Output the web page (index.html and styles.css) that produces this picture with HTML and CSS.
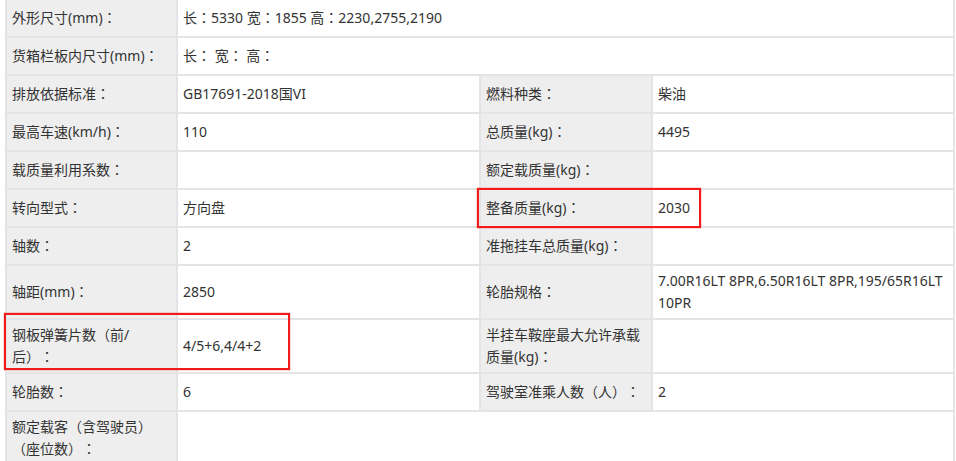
FILE: index.html
```html
<!DOCTYPE html>
<html lang="ja">

<head>
    <meta charset="UTF-8">
    <meta name="viewport" content="width=device-width, initial-scale=1.0">
    <title>车辆参数</title>
    <link rel="stylesheet" href="styles.css">
</head>

<body>

    <div class="params">
        <table class="spec">
            <colgroup>
                <col class="c-label">
                <col class="c-value">
                <col class="c-label2">
                <col class="c-value2">
            </colgroup>
            <tr>
                <td class="label">外形尺寸(mm)：</td>
                <td colspan="3">长：5330 宽：1855 高：2230,2755,2190</td>
            </tr>
            <tr>
                <td class="label">货箱栏板内尺寸(mm)：</td>
                <td colspan="3">长： 宽： 高：</td>
            </tr>
            <tr>
                <td class="label">排放依据标准：</td>
                <td>GB17691-2018国VI</td>
                <td class="label">燃料种类：</td>
                <td>柴油</td>
            </tr>
            <tr>
                <td class="label">最高车速(km/h)：</td>
                <td>110</td>
                <td class="label">总质量(kg)：</td>
                <td>4495</td>
            </tr>
            <tr>
                <td class="label">载质量利用系数：</td>
                <td></td>
                <td class="label">额定载质量(kg)：</td>
                <td></td>
            </tr>
            <tr>
                <td class="label">转向型式：</td>
                <td>方向盘</td>
                <td class="label">整备质量(kg)：</td>
                <td>2030</td>
            </tr>
            <tr>
                <td class="label">轴数：</td>
                <td>2</td>
                <td class="label">准拖挂车总质量(kg)：</td>
                <td></td>
            </tr>
            <tr>
                <td class="label">轴距(mm)：</td>
                <td>2850</td>
                <td class="label">轮胎规格：</td>
                <td>7.00R16LT 8PR,6.50R16LT 8PR,195/65R16LT 10PR</td>
            </tr>
            <tr>
                <td class="label">钢板弹簧片数（前/后）：</td>
                <td>4/5+6,4/4+2</td>
                <td class="label">半挂车鞍座最大允许承载质量(kg)：</td>
                <td></td>
            </tr>
            <tr>
                <td class="label">轮胎数：</td>
                <td>6</td>
                <td class="label">驾驶室准乘人数（人）：</td>
                <td>2</td>
            </tr>
            <tr class="last">
                <td class="label">额定载客（含驾驶员）（座位数）：</td>
                <td colspan="3"></td>
            </tr>
        </table>

        <!-- highlight marks -->
        <div class="mark mark-weight"></div>
        <div class="mark mark-spring"></div>
    </div>

</body>

</html>
```

FILE: styles.css
```css
body {
    margin: 0;
    background-color: #fff;
    font-family: "Noto Sans", "Noto Sans CJK JP", sans-serif;
    font-size: 14px;
    color: #333;
    overflow: hidden;
    text-spacing-trim: space-all;
}

.params {
    position: relative;
    padding-left: 5px;
    margin-top: -2px;
}

.spec {
    width: 950px;
    border-collapse: collapse;
    table-layout: fixed;
}

.c-label {
    width: 171px;
}

.c-value {
    width: 303px;
}

.c-label2 {
    width: 172px;
}

.spec td {
    border: 2px solid #e4e4e4;
    height: 28px;
    padding: 4px 4px 4px 5px;
    line-height: 22px;
    vertical-align: middle;
}

.spec td.label {
    background-color: #eeeeee;
    padding-right: 9px;
}

.spec .last td {
    border-bottom: none;
}

.mark {
    position: absolute;
    border: 2px solid #f01c1c;
    box-shadow: 0 0 1px #f01c1c;
}

.mark-weight {
    left: 477px;
    top: 190px;
    width: 220px;
    height: 36px;
}

.mark-spring {
    left: 4px;
    top: 315px;
    width: 282px;
    height: 53px;
}
```
